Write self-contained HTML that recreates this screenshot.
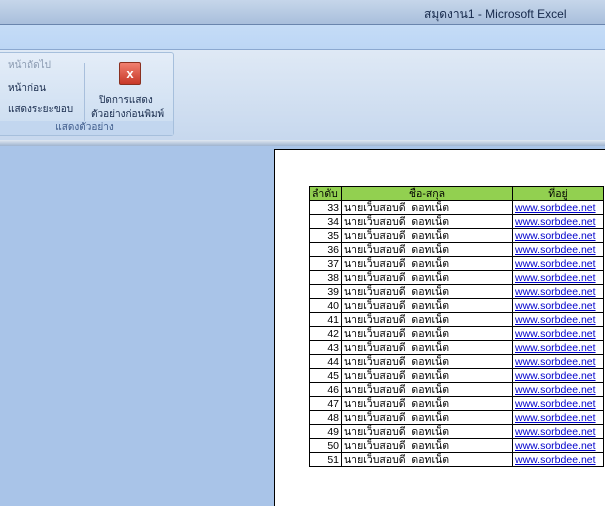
<!DOCTYPE html>
<html><head><meta charset="utf-8"><style>
*{margin:0;padding:0;box-sizing:border-box}
html,body{width:605px;height:506px;overflow:hidden}
body{position:relative;background:#a9c4e8;font-family:Tahoma,"Liberation Sans","Noto Sans CJK SC",sans-serif;}
.title{position:absolute;left:0;top:0;width:605px;height:25px;background:linear-gradient(#c6d6ea,#a9bfdc);border-bottom:1px solid #6a85ad}
.title span{position:absolute;left:424px;top:5px;font-size:12px;color:#15284a}
.tabs{position:absolute;left:0;top:25px;width:605px;height:25px;background:linear-gradient(#c5dcf7,#bcd6f5);border-bottom:1px solid #8ba8d0}
.ribbon{position:absolute;left:0;top:50px;width:605px;height:90px;background:linear-gradient(#dfe9f5,#c7d8ee)}
.grp{position:absolute;left:-5px;top:2px;width:179px;height:84px;border:1px solid #a6bfdc;border-radius:3px;background:linear-gradient(#e4edf8,#cadcf0)}
.grp .lbl{position:absolute;left:0;right:0;bottom:0;height:14px;background:#c2d6ef;text-align:center;font-size:10px;color:#3d5a8a;line-height:13px}
.t{position:absolute;font-size:10px;line-height:12px;color:#15284a;white-space:nowrap}
.sep{position:absolute;top:10px;width:1px;height:58px;background:#a8bfdc}
.xb{position:absolute;left:119px;width:22px;height:23px;border:1px solid #8a3020;border-radius:2px;background:linear-gradient(#f08070,#c83828);color:#fff;font-size:13px;font-weight:bold;text-align:center;line-height:21px}
.div{position:absolute;left:0;top:140px;width:605px;height:6px;background:linear-gradient(#e0e8f2,#9fb4cf)}
.page{position:absolute;left:274px;top:149px;width:340px;height:370px;background:#fff;border:1px solid #000}
table{position:absolute;left:309px;top:186px;border-collapse:collapse;font-size:10.5px;font-family:Tahoma,"Liberation Sans","Noto Sans CJK SC",sans-serif}
td{border:1px solid #000;height:14px;padding:0 2px;line-height:12px;white-space:nowrap;overflow:hidden}
tr.h td{background:#92d050;text-align:center}
td.n{width:32px;text-align:right;padding-right:2px}
td.m{width:171px}
td.u{width:91px;color:#00c;text-decoration:underline}
</style></head><body>
<div class="title"><span>สมุดงาน1 - Microsoft Excel</span></div>
<div class="tabs"></div>
<div class="ribbon">
<div class="grp">
<div class="t" style="left:12px;top:7px;color:#8a9ab0">หน้าถัดไป</div>
<div class="t" style="left:12px;top:30px">หน้าก่อน</div>
<div class="t" style="left:12px;top:51px">แสดงระยะขอบ</div>
<div class="sep" style="left:88px"></div>
<div class="t" style="left:103px;top:42px">ปิดการแสดง</div>
<div class="t" style="left:95px;top:56px">ตัวอย่างก่อนพิมพ์</div>
<div class="lbl">แสดงตัวอย่าง</div>
</div>
<div class="xb" style="top:12px">x</div>
</div>
<div class="div"></div>
<div class="page"></div>
<table>
<tr class="h"><td class="n" style="text-align:left">ลำดับ</td><td class="m" style="text-align:center">ชื่อ-สกุล</td><td class="u" style="color:#000;text-decoration:none;text-align:center">ที่อยู่</td></tr>
<tr><td class="n">33</td><td class="m">นายเว็บสอบดี&nbsp; ดอทเน็ต</td><td class="u">www.sorbdee.net</td></tr>
<tr><td class="n">34</td><td class="m">นายเว็บสอบดี&nbsp; ดอทเน็ต</td><td class="u">www.sorbdee.net</td></tr>
<tr><td class="n">35</td><td class="m">นายเว็บสอบดี&nbsp; ดอทเน็ต</td><td class="u">www.sorbdee.net</td></tr>
<tr><td class="n">36</td><td class="m">นายเว็บสอบดี&nbsp; ดอทเน็ต</td><td class="u">www.sorbdee.net</td></tr>
<tr><td class="n">37</td><td class="m">นายเว็บสอบดี&nbsp; ดอทเน็ต</td><td class="u">www.sorbdee.net</td></tr>
<tr><td class="n">38</td><td class="m">นายเว็บสอบดี&nbsp; ดอทเน็ต</td><td class="u">www.sorbdee.net</td></tr>
<tr><td class="n">39</td><td class="m">นายเว็บสอบดี&nbsp; ดอทเน็ต</td><td class="u">www.sorbdee.net</td></tr>
<tr><td class="n">40</td><td class="m">นายเว็บสอบดี&nbsp; ดอทเน็ต</td><td class="u">www.sorbdee.net</td></tr>
<tr><td class="n">41</td><td class="m">นายเว็บสอบดี&nbsp; ดอทเน็ต</td><td class="u">www.sorbdee.net</td></tr>
<tr><td class="n">42</td><td class="m">นายเว็บสอบดี&nbsp; ดอทเน็ต</td><td class="u">www.sorbdee.net</td></tr>
<tr><td class="n">43</td><td class="m">นายเว็บสอบดี&nbsp; ดอทเน็ต</td><td class="u">www.sorbdee.net</td></tr>
<tr><td class="n">44</td><td class="m">นายเว็บสอบดี&nbsp; ดอทเน็ต</td><td class="u">www.sorbdee.net</td></tr>
<tr><td class="n">45</td><td class="m">นายเว็บสอบดี&nbsp; ดอทเน็ต</td><td class="u">www.sorbdee.net</td></tr>
<tr><td class="n">46</td><td class="m">นายเว็บสอบดี&nbsp; ดอทเน็ต</td><td class="u">www.sorbdee.net</td></tr>
<tr><td class="n">47</td><td class="m">นายเว็บสอบดี&nbsp; ดอทเน็ต</td><td class="u">www.sorbdee.net</td></tr>
<tr><td class="n">48</td><td class="m">นายเว็บสอบดี&nbsp; ดอทเน็ต</td><td class="u">www.sorbdee.net</td></tr>
<tr><td class="n">49</td><td class="m">นายเว็บสอบดี&nbsp; ดอทเน็ต</td><td class="u">www.sorbdee.net</td></tr>
<tr><td class="n">50</td><td class="m">นายเว็บสอบดี&nbsp; ดอทเน็ต</td><td class="u">www.sorbdee.net</td></tr>
<tr><td class="n">51</td><td class="m">นายเว็บสอบดี&nbsp; ดอทเน็ต</td><td class="u">www.sorbdee.net</td></tr>
</table>
</body></html>
